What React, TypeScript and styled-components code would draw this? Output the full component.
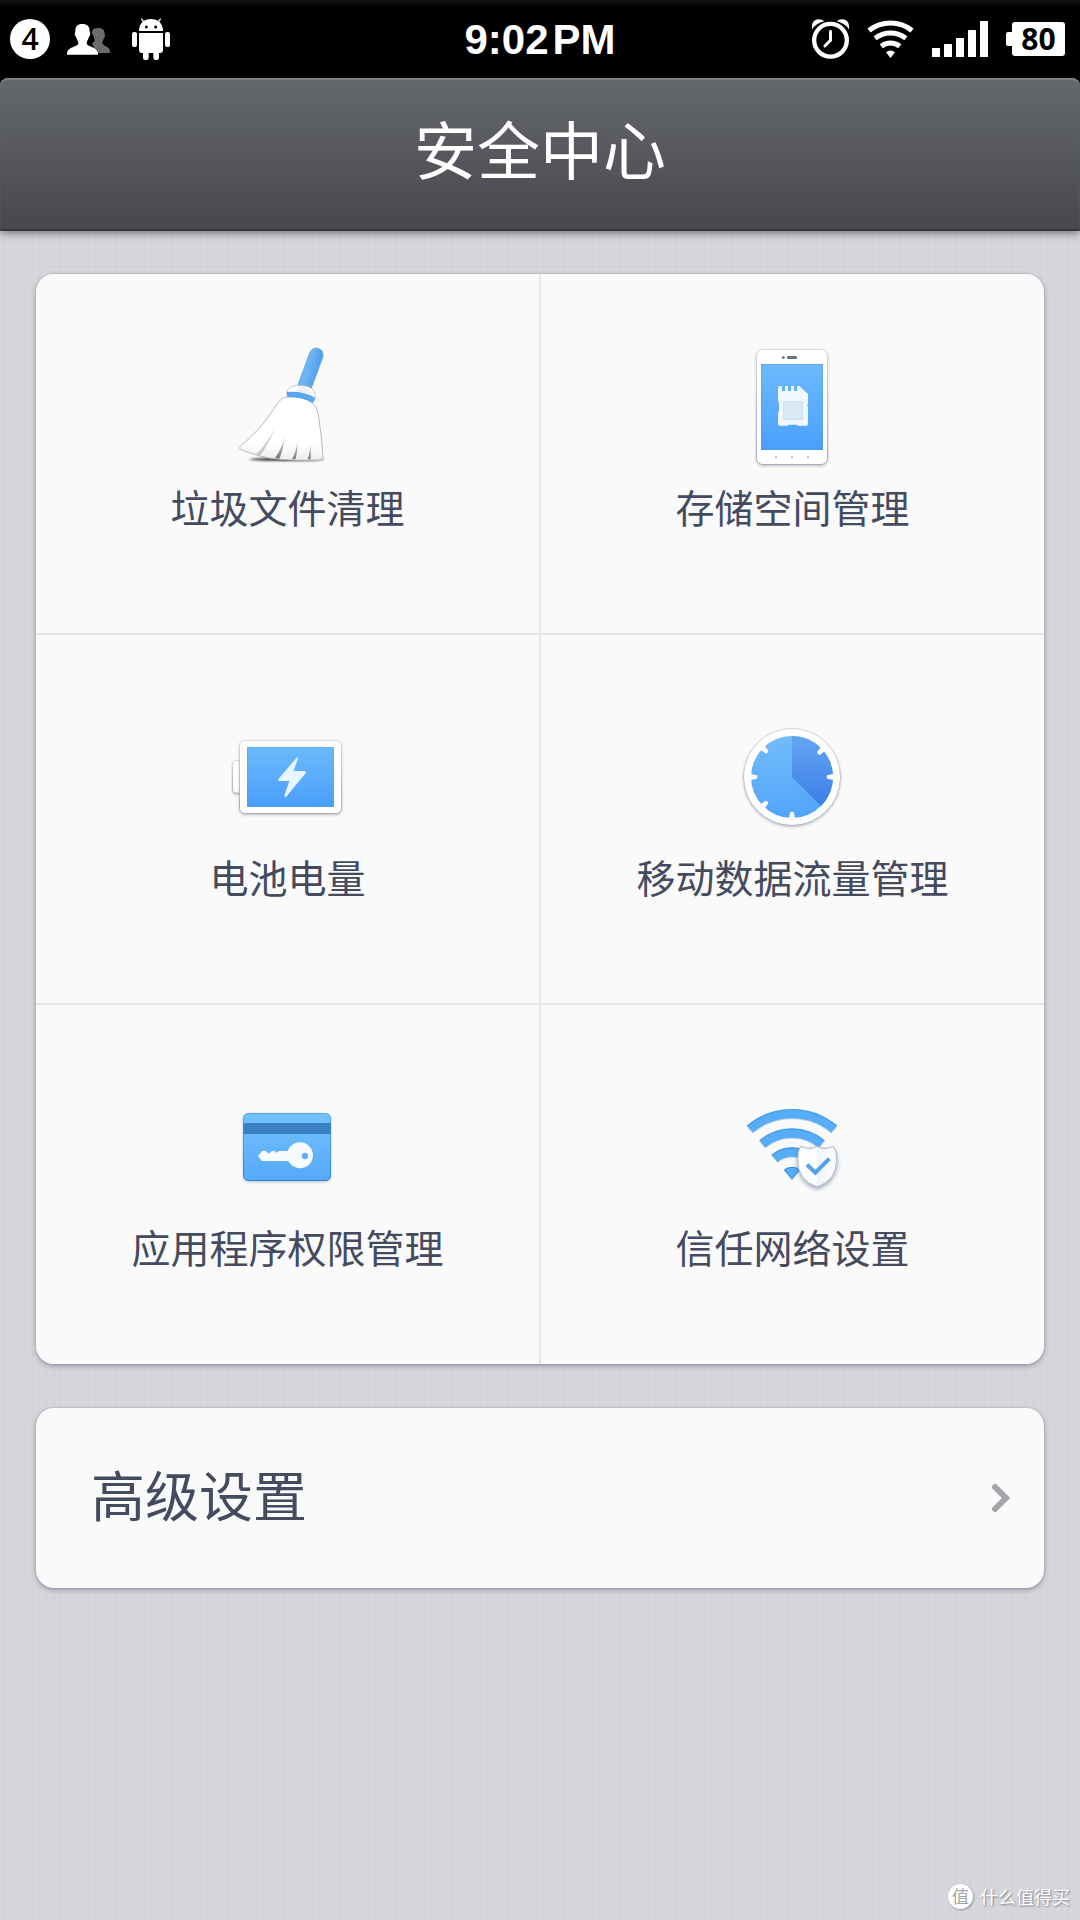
import React from 'react';
import styled, { createGlobalStyle } from 'styled-components';

const cjk = `"Noto Sans CJK SC", "Noto Sans", sans-serif`;

const GlobalStyle = createGlobalStyle`
  *, *::before, *::after { box-sizing: border-box; }
  body { margin: 0; background: #d5d6db; }
`;

const Page = styled.div`
  display: flex;
  flex-direction: column;
  min-height: 100vh;
  font-family: ${cjk};
  color: #454b5f;
  background:
    repeating-linear-gradient(90deg, rgba(255, 255, 255, 0.06) 0 1px, transparent 1px 4px, rgba(110, 116, 140, 0.025) 4px 5px, transparent 5px 7px),
    repeating-linear-gradient(0deg, rgba(255, 255, 255, 0.06) 0 1px, transparent 1px 3px, rgba(110, 116, 140, 0.025) 3px 4px, transparent 4px 11px),
    #d5d6db;
`;

const TopArea = styled.div`
  background: linear-gradient(#141414, #000 8px);
`;

const StatusBar = styled.div`
  display: grid;
  grid-template-columns: 1fr auto 1fr;
  align-items: center;
  height: 78px;
  padding: 0 10px;
  color: #fff;
`;

const StatusGroup = styled.div<{ $end?: boolean }>`
  display: flex;
  align-items: center;
  justify-content: ${(p) => (p.$end ? 'flex-end' : 'flex-start')};
  gap: ${(p) => (p.$end ? 18 : 17)}px;
  padding-right: ${(p) => (p.$end ? 5 : 0)}px;
`;

const Clock = styled.time`
  display: flex;
  gap: 4px;
  padding-top: 2px;
  font: bold 42px/48px "Liberation Sans", Arial, sans-serif;
`;

const CountBadge = styled.span`
  width: 40px;
  height: 40px;
  border-radius: 50%;
  background: #fff;
  color: #000;
  text-align: center;
  font: 600 30px/40px "Open Sans", "Noto Sans", sans-serif;
`;

const BatteryLevel = styled.span`
  display: flex;
  align-items: center;
  color: #000;
  font: bold 30px/34px "Open Sans", "Noto Sans", sans-serif;

  &::before {
    content: '';
    width: 6px;
    height: 14px;
    border-radius: 2px 0 0 2px;
    background: #fff;
  }
`;

const BatteryBody = styled.span`
  width: 53px;
  height: 34px;
  border-radius: 3px;
  background: #fff;
  text-align: center;
`;

const Header = styled.header`
  display: flex;
  align-items: center;
  justify-content: center;
  height: 153px;
  padding-bottom: 16px;
  border-radius: 8px 8px 0 0;
  background: linear-gradient(#64676c, #56585d 50%, #47484c);
  box-shadow:
    inset 0 2px 1px #7c8186,
    inset 0 -2px 0 #36373b,
    0 2px 9px rgba(20, 22, 30, 0.55);
`;

const Title = styled.h1`
  margin: 0;
  color: #fff;
  font-size: 63px;
  font-weight: 400;
  line-height: 80px;
`;

const Content = styled.main`
  display: flex;
  flex-direction: column;
  gap: 44px;
  padding: 43px 36px;
`;

const cardShadow = `0 2px 5px rgba(30, 34, 50, 0.35), 0 0 2px rgba(30, 34, 50, 0.2)`;

const ToolGrid = styled.section`
  display: grid;
  grid-template-columns: 1fr 1fr;
  grid-template-rows: 359px 368px 359px;
  gap: 2px;
  overflow: hidden;
  border-radius: 18px;
  background: #e5e6e8;
  box-shadow: ${cardShadow};
`;

const ToolButton = styled.button<{ $top: number }>`
  display: flex;
  flex-direction: column;
  align-items: center;
  justify-content: flex-start;
  gap: 9px;
  margin: 0;
  padding: ${(p) => p.$top}px 0 0;
  border: 0;
  background: #fafafa;
  color: inherit;
  font: 400 39px/52px ${cjk};
  cursor: pointer;
`;

const ToolIcon = styled.svg`
  display: block;
  width: 127px;
  height: 128px;
`;

const AdvancedButton = styled.button`
  display: flex;
  align-items: center;
  justify-content: space-between;
  height: 180px;
  padding: 0 34px 0 55px;
  border: 0;
  border-radius: 18px;
  background: #fafafa;
  box-shadow: ${cardShadow};
  color: inherit;
  font: 400 54px/72px ${cjk};
  cursor: pointer;
`;

const AdvancedLabel = styled.span`
  padding-bottom: 8px;
`;

const Footer = styled.footer`
  display: flex;
  align-items: center;
  justify-content: flex-end;
  gap: 7px;
  margin-top: auto;
  padding: 0 10px 11px;
  color: #fff;
  font-size: 18px;
  line-height: 26px;
  text-shadow: 1px 1px 2px rgba(80, 84, 96, 0.7);
`;

const FooterMark = styled.span`
  width: 25px;
  height: 25px;
  border-radius: 50%;
  background: #fff;
  box-shadow: 1px 1px 2px rgba(80, 84, 96, 0.5);
  color: #a2a4a9;
  text-align: center;
  font-size: 17px;
  line-height: 24px;
  text-shadow: none;
`;

/* Arc spanning `deg` degrees on both sides of the vertical through (cx, cy). */
function fan(cx: number, cy: number, r: number, deg: number) {
  const a = (deg * Math.PI) / 180;
  const dx = r * Math.sin(a);
  const y = cy - r * Math.cos(a);
  return `M${cx - dx} ${y}A${r} ${r} 0 0 1 ${cx + dx} ${y}`;
}

const PeopleIcon = () => (
  <svg width="43" height="31" viewBox="201 72 129 93" aria-hidden="true">
    <path fill="#6b6b6b" d="M296 84c12 0 19 7 18 19 2 3 1 9-2 11-2 7-5 10-5 15 0 9 23 10 23 25v5h-42l-12-30c5-2 8-5 8-10 0-4-3-8-5-15-4-3-4-8-2-11 0-6 7-9 19-9z" />
    <path fill="#fff" stroke="#000" strokeWidth="3" paintOrder="stroke" d="M247 72c15 0 23 8 22 23 3 3 2 12-2 15-2 8-7 13-7 20 0 11 33 10 34 30v4h-93v-4c1-20 34-19 34-30 0-7-5-12-7-20-4-3-5-12-2-15-1-15 6-23 21-23z" />
  </svg>
);

const AndroidIcon = () => (
  <svg width="43" height="42" viewBox="381 51 129 126" aria-hidden="true">
    <g fill="#fff">
      <path d="M417 90C417 66 433 54 453 54S489 66 489 90Z" />
      <path d="M424 53l8 11M482 53l-8 11" stroke="#fff" strokeWidth="4" />
      <path d="M417 96h72v50q0 10-10 10h-52q-10 0-10-10z" />
      <rect x="396" y="93" width="15" height="45" rx="6" />
      <rect x="495" y="93" width="15" height="45" rx="6" />
      <rect x="429" y="148" width="17" height="29" rx="7" />
      <rect x="460" y="148" width="17" height="29" rx="7" />
    </g>
    <circle cx="439" cy="78" r="4.5" />
    <circle cx="467" cy="78" r="4.5" />
  </svg>
);

const AlarmIcon = () => (
  <svg width="37" height="40" viewBox="93 60 112 120" fill="none" stroke="#fff" aria-hidden="true">
    <circle cx="149" cy="124" r="49.5" strokeWidth="13" />
    <path d="M149 97v27l-17 17" strokeWidth="9" strokeLinecap="round" />
    <path d="M93 91V80q2-20 20-20 12 0 17 6-25 5-37 25zM205 91V80q-2-20-20-20-12 0-17 6 25 5 37 25z" fill="#fff" stroke="none" />
  </svg>
);

const WifiIcon = () => (
  <svg width="47" height="38" viewBox="260 58 140 114" fill="none" stroke="#fff" strokeWidth="15" aria-hidden="true">
    <path d={fan(330, 172, 105, 38)} />
    <path d={fan(330, 172, 75, 38)} />
    <path d={fan(330, 172, 45, 38)} />
    <path d={`${fan(330, 172, 22, 38)}L330 172Z`} fill="#fff" stroke="none" />
  </svg>
);

const SignalIcon = () => (
  <svg width="56" height="36" viewBox="0 0 56 36" fill="#fff" aria-hidden="true">
    {[9, 13, 19, 27, 36].map((h, i) => (
      <rect key={h} x={i * 12} y={36 - h} width="8" height={h} rx="0.5" />
    ))}
  </svg>
);

const BroomIcon = () => (
  <ToolIcon viewBox="222 39 381 384" aria-hidden="true">
    <defs>
      <linearGradient id="handle" x1="0" x2="1" y1="0" y2="0.4">
        <stop offset="0" stopColor="#5eacf0" />
        <stop offset="0.5" stopColor="#6cb5f6" />
        <stop offset="1" stopColor="#4c98e0" />
      </linearGradient>
      <linearGradient id="bristle" x1="0" x2="0" y1="0" y2="1">
        <stop offset="0.75" stopColor="#fff" />
        <stop offset="1" stopColor="#ececec" />
      </linearGradient>
      <linearGradient id="slit" x1="0" x2="0" y1="0" y2="1">
        <stop offset="0" stopColor="#ddd" />
        <stop offset="1" stopColor="#777" />
      </linearGradient>
      <filter id="ground" x="-20%" y="-200%" width="140%" height="500%">
        <feGaussianBlur stdDeviation="5 2.5" />
      </filter>
    </defs>
    <ellipse cx="410" cy="388" rx="112" ry="5" fill="#333" filter="url(#ground)" />
    <path d="M443 167L479 68Q486 54 500 54Q522 58 519 80L483 178Z" fill="url(#handle)" stroke="#4f9de4" strokeWidth="2" />
    <path d="M410 190Q410 170 442 166Q482 166 493 184Q499 196 493 212L411 196Z" fill="#fff" stroke="#c4c4c4" strokeWidth="3" />
    <path d="M440 168Q480 170 490 196Q466 186 430 184Q456 182 440 168Z" fill="#eee" />
    <path d="M404 202Q452 194 487 218Q502 230 505 254Q514 310 519 378Q519 390 505 390Q390 394 330 378Q290 367 269 356Q267 352 274 346Q330 300 372 236Q390 206 404 202Z" fill="url(#bristle)" stroke="#b9b9b9" strokeWidth="3" />
    <path d="M411 186Q458 182 496 203L488 220Q458 200 411 201Z" fill="#59a8ef" />
    <path d="M376 294Q342 354 316 374L330 378Q348 354 376 294Z" fill="#c9c9c9" />
    <path d="M405 318Q394 360 375 383L388 386Q398 366 405 318ZM443 334Q438 366 427 387L436 388Q442 370 443 334ZM482 338Q480 370 473 388L482 388Z" fill="url(#slit)" />
  </ToolIcon>
);

const PhoneIcon = () => (
  <ToolIcon viewBox="207 39 381 384" aria-hidden="true">
    <defs>
      <linearGradient id="screen" x1="0" x2="0" y1="0" y2="1">
        <stop offset="0" stopColor="#6cbafc" />
        <stop offset="1" stopColor="#4a9ffb" />
      </linearGradient>
      <linearGradient id="rim" x1="0" x2="0" y1="0" y2="1">
        <stop offset="0" stopColor="#d3dae2" />
        <stop offset="1" stopColor="#a4afba" />
      </linearGradient>
      <filter id="soft" x="-20%" y="-20%" width="140%" height="150%">
        <feDropShadow dx="0" dy="4" stdDeviation="3" floodColor="#46505e" floodOpacity="0.3" />
      </filter>
    </defs>
    <rect x="289.5" y="58.5" width="213" height="345" rx="19" fill="#fff" stroke="url(#rim)" strokeWidth="3" filter="url(#soft)" />
    <circle cx="370" cy="82.500" r="4.500" fill="#6f7f92" />
    <rect x="381" y="78" width="30" height="9" rx="4" fill="#64758a" />
    <rect x="303" y="102" width="186" height="258" fill="url(#screen)" />
    <path d="M304.500 360V103.500H487.500V360" fill="none" stroke="#559fe0" strokeWidth="3" opacity="0.5" />
    <path d="M354 174q0-6 6-6h6v15h9v-15h9v15h9v-15h9v15h9v-15h7l26 24v30l-3 4 3 4v51q0 6-6 6h-24l-4-3h-23l-4 3h-23q-6 0-6-6v-33l3-5v-25l-3-5z" fill="#f0f8ff" />
    <rect x="370.500" y="214.500" width="57" height="54" fill="#d8e8f5" stroke="#cbdfee" strokeWidth="3" />
    <path d="M345 378h6v6h-6zM393 378h6v6h-6zM441 378h6v6h-6z" fill="#bcc3d4" />
  </ToolIcon>
);

const BatteryIcon = () => (
  <ToolIcon viewBox="72 9 381 384" aria-hidden="true">
    <path d="M120 151.500H110Q97.500 151.500 97.500 165V235Q97.500 249.500 110 249.500H120Z" fill="#fff" stroke="url(#rim)" strokeWidth="3" filter="url(#soft)" />
    <rect x="118.500" y="91.500" width="306" height="219" rx="16" fill="#fff" stroke="url(#rim)" strokeWidth="3" filter="url(#soft)" />
    <rect x="141" y="111" width="261" height="180" rx="3" fill="url(#screen)" />
    <path d="M142.500 289V112.500H400.500V289" fill="none" stroke="#559fe0" strokeWidth="3" opacity="0.5" />
    <path d="M292 141L235 207Q233 213 239 213H268L253 257Q254 264 260 259L318 188Q319 183 313 183H281L294 145Q294 140 292 141Z" fill="#e8f4ff" />
  </ToolIcon>
);

const UsageIcon = () => (
  <ToolIcon viewBox="57 9 381 384" aria-hidden="true">
    <defs>
      <linearGradient id="slice" x1="0" x2="0" y1="0" y2="1">
        <stop offset="0" stopColor="#64a5f2" />
        <stop offset="1" stopColor="#3b7ee8" />
      </linearGradient>
      <linearGradient id="dial" x1="0" x2="0" y1="0" y2="1">
        <stop offset="0" stopColor="#72bcfb" />
        <stop offset="1" stopColor="#52a4f9" />
      </linearGradient>
    </defs>
    <circle cx="246" cy="201" r="145.500" fill="#fff" stroke="url(#rim)" strokeWidth="3" filter="url(#soft)" />
    <circle cx="246" cy="201" r="123" fill="url(#dial)" />
    <path d="M246 201V78A123 123 0 0 1 333 288Z" fill="url(#slice)" />
    {[48, 90, 180, 225, 270, 315].map((a) => (
      <path key={a} d="M237 76L240 93Q240 97 246 97Q252 97 252 93L255 76Z" fill="#fff" transform={`rotate(${a} 246 201)`} />
    ))}
  </ToolIcon>
);

const KeyCardIcon = () => (
  <ToolIcon viewBox="42 9 381 384" aria-hidden="true">
    <defs>
      <linearGradient id="cardFill" x1="0" x2="0" y1="0" y2="1">
        <stop offset="0" stopColor="#74c1ff" />
        <stop offset="1" stopColor="#56a9f8" />
      </linearGradient>
      <linearGradient id="cardRim" x1="0" x2="0" y1="0" y2="1">
        <stop offset="0" stopColor="#4fa5e8" />
        <stop offset="1" stopColor="#2d87cf" />
      </linearGradient>
    </defs>
    <rect x="100.500" y="100.500" width="261" height="201" rx="14" fill="url(#cardFill)" stroke="url(#cardRim)" strokeWidth="3" filter="url(#soft)" />
    <rect x="100" y="129" width="262" height="33" fill="#3b80bf" />
    <path d="M144 228L156 214Q160 211 167 213Q171 215 174 220Q179 222 182 215Q188 211 195 214Q200 222 204 214Q207 213 212 213H233A39 39 0 1 1 235 243H159Q156 243 153 240Z" fill="#f7fbff" />
    <circle cx="285" cy="228" r="9.500" fill="#5fb0f8" />
  </ToolIcon>
);

const TrustedNetworkIcon = () => (
  <ToolIcon viewBox="27 9 381 384" aria-hidden="true">
    <defs>
      <linearGradient id="shield" x1="0" x2="1" y1="0" y2="0">
        <stop offset="0" stopColor="#fff" />
        <stop offset="0.5" stopColor="#fbfcfd" />
        <stop offset="0.5" stopColor="#f1f5f8" />
        <stop offset="1" stopColor="#fbfcfd" />
      </linearGradient>
      <filter id="waveEdge" x="-10%" y="-10%" width="120%" height="130%">
        <feDropShadow dx="0" dy="2" stdDeviation="2" floodColor="#2f6ea8" floodOpacity="0.4" />
      </filter>
      <filter id="shieldShadow" x="-30%" y="-20%" width="160%" height="160%">
        <feDropShadow dx="0" dy="6" stdDeviation="6" floodColor="#4b5c80" floodOpacity="0.55" />
      </filter>
    </defs>
    <g fill="none" stroke="#59adf8" strokeWidth="28" filter="url(#waveEdge)">
      <path d={fan(216, 298, 197, 40)} />
      <path d={fan(216, 298, 139, 40)} />
      <path d={fan(216, 298, 82, 40)} />
      <path d={`${fan(216, 298, 38, 40)}L216 298Z`} fill="#59adf8" stroke="none" />
    </g>
    <g fill="none" stroke="#3390dd" strokeWidth="3">
      <path d={fan(216, 298, 209, 40)} opacity="0.5" />
      <path d={fan(216, 298, 151, 40)} opacity="0.7" />
      <path d={fan(216, 298, 94, 40)} />
      <path d={`${fan(216, 298, 36, 38)}L216 296Z`} />
    </g>
    <path d="M241 199Q268 212 291 199Q314 212 341 199Q350 215 350 240Q350 301 291 321Q233 301 233 240Q233 215 241 199Z" fill="url(#shield)" stroke="#a9bac9" strokeWidth="3" filter="url(#shieldShadow)" />
    <path d="M261 254L286 278L328 236" fill="none" stroke="#539ff0" strokeWidth="12" strokeLinejoin="miter" />
  </ToolIcon>
);

const ChevronIcon = () => (
  <svg width="19" height="30" viewBox="0 0 19 30" fill="none" aria-hidden="true">
    <path d="M4 4l11 11L4 26" stroke="#a2a6aa" strokeWidth="6" strokeLinecap="round" />
  </svg>
);

const tools = [
  { label: '垃圾文件清理', Icon: BroomIcon, top: 69 },
  { label: '存储空间管理', Icon: PhoneIcon, top: 69 },
  { label: '电池电量', Icon: BatteryIcon, top: 78 },
  { label: '移动数据流量管理', Icon: UsageIcon, top: 78 },
  { label: '应用程序权限管理', Icon: KeyCardIcon, top: 78 },
  { label: '信任网络设置', Icon: TrustedNetworkIcon, top: 78 },
];

export default function App() {
  return (
    <Page>
      <GlobalStyle />
      <TopArea>
        <StatusBar>
          <StatusGroup>
            <CountBadge>4</CountBadge>
            <PeopleIcon />
            <AndroidIcon />
          </StatusGroup>
          <Clock>
            <span>9:02</span>
            <span>PM</span>
          </Clock>
          <StatusGroup $end>
            <AlarmIcon />
            <WifiIcon />
            <SignalIcon />
            <BatteryLevel>
              <BatteryBody>80</BatteryBody>
            </BatteryLevel>
          </StatusGroup>
        </StatusBar>
        <Header>
          <Title>安全中心</Title>
        </Header>
      </TopArea>
      <Content>
        <ToolGrid>
          {tools.map(({ label, Icon, top }) => (
            <ToolButton key={label} type="button" $top={top}>
              <Icon />
              <span>{label}</span>
            </ToolButton>
          ))}
        </ToolGrid>
        <AdvancedButton type="button">
          <AdvancedLabel>高级设置</AdvancedLabel>
          <ChevronIcon />
        </AdvancedButton>
      </Content>
      <Footer>
        <FooterMark>值</FooterMark>
        <span>什么值得买</span>
      </Footer>
    </Page>
  );
}
